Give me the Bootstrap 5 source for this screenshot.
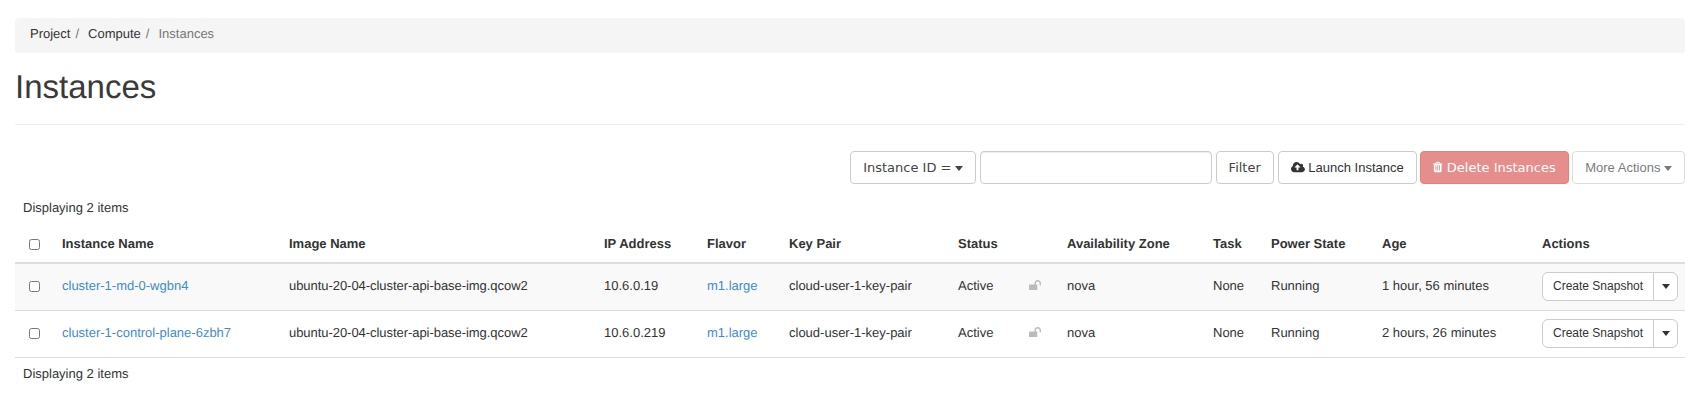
<!DOCTYPE html>
<html lang="en">
  <head>
    <meta charset="UTF-8" />
    <meta name="viewport" content="width=device-width, initial-scale=1.0" />
    <title>Instances</title>
    <link href="https://cdn.jsdelivr.net/npm/bootstrap@5.3.3/dist/css/bootstrap.min.css" rel="stylesheet" />
    <style>
      body {
        color: #333;
        font-family: "Liberation Sans", Arial, sans-serif;
        font-size: 13px;
        line-height: 1.43;
        text-rendering: geometricPrecision;
      }

      .page-wrap {
        padding: 18px 15px 0;
      }

      .crumbs {
        background-color: #f5f5f5;
        border-radius: 4px;
        height: 35px;
        padding: 7px 15px;
        margin: 0;
        font-size: 13px;
      }

      .crumbs .breadcrumb-item + .breadcrumb-item {
        padding-left: 5px;
      }

      .crumbs .breadcrumb-item + .breadcrumb-item::before {
        color: #777;
        padding-right: 9px;
      }

      .crumbs .breadcrumb-item {
        color: #333;
      }

      .crumbs .breadcrumb-item.active {
        color: #777;
      }

      .page-title {
        font-family: "Liberation Sans", Arial, sans-serif;
        font-size: 33px;
        font-weight: 400;
        line-height: 36px;
        color: #3a3a3a;
        margin: 16px 0 0;
        padding-bottom: 19px;
        border-bottom: 1px solid #eee;
      }

      .toolbar {
        margin-top: 26px;
        gap: 4px;
      }

      .tool-btn {
        font-family: "DejaVu Sans", sans-serif;
        font-size: 13px;
        height: 33px;
        padding: 0 12px;
        color: #444;
        background-color: #fff;
        border: 1px solid #ccc;
        border-radius: 4px;
        line-height: 31px;
        white-space: nowrap;
      }

      .tool-btn.plain-font {
        font-family: "Liberation Sans", Arial, sans-serif;
        font-size: 13px;
        line-height: 27px;
        color: #333;
      }

      .tool-btn.btn-del,
      .tool-btn.btn-del:disabled {
        background-color: #d9534f;
        border-color: #d43f3a;
        color: #fff;
        opacity: 0.65;
        padding: 0 12.5px;
        margin-left: -1px;
      }

      .tool-btn.btn-more,
      .tool-btn.btn-more:disabled {
        color: #333;
        border-color: #ccc;
        background-color: #fff;
        opacity: 0.65;
        margin-left: -1px;
      }

      .filter-input {
        width: 232px;
        height: 33px;
        border: 1px solid #ccc;
        border-radius: 4px;
        box-shadow: inset 0 1px 1px rgba(0, 0, 0, 0.075);
      }

      .caret-mark {
        display: inline-block;
        width: 0;
        height: 0;
        margin-left: 0;
        vertical-align: middle;
        border-top: 5px solid;
        border-left: 4px solid transparent;
        border-right: 4px solid transparent;
      }

      .caret-mark.tight {
        margin-left: -1px;
      }

      .tool-icon {
        height: 12px;
        vertical-align: -1px;
        fill: currentColor;
      }

      .cloud-icon {
        height: 13px;
        vertical-align: -2px;
      }

      .item-count {
        padding: 0 8px;
        margin: 0;
        color: #333;
        line-height: 19px;
      }

      .top-count {
        margin-top: 14px;
      }

      .bottom-count {
        margin-top: 6px;
      }

      .inst-table {
        table-layout: fixed;
        width: 1670px;
        margin: 0;
        color: #333;
        --bs-table-bg: transparent;
      }

      .inst-table th {
        font-weight: 700;
        height: 46px;
        padding: 8px;
        vertical-align: bottom;
        border-bottom: 2px solid #ddd;
      }

      .inst-table td {
        height: 47px;
        padding: 8px 8px 9px;
        vertical-align: middle;
        border-bottom: 1px solid #ddd;
        white-space: nowrap;
      }

      .inst-table tbody tr:first-child td {
        background-color: #f9f9f9;
      }

      .inst-table a {
        color: #428bca;
        text-decoration: none;
      }

      .inst-table td.image-name {
        letter-spacing: -0.05px;
      }

      .inst-table input[type="checkbox"] {
        display: block;
        width: 11px;
        height: 11px;
        margin: 0 0 0 6px;
      }

      .inst-table th input[type="checkbox"] {
        margin-bottom: 4px;
      }

      .lock-icon {
        width: 12px;
        height: 11px;
        fill: #bbb;
        display: block;
        margin: -2px 0 0 1px;
      }

      .snap-btn {
        font-size: 12px;
        color: #333;
        background-color: #fff;
        border-color: #ccc;
        height: 29px;
        line-height: 17px;
        padding: 5px 10px;
        white-space: nowrap;
      }

      .snap-toggle {
        width: 25px;
        padding: 0;
      }
    </style>
  </head>
  <body>
    <div class="page-wrap">
      <nav aria-label="breadcrumb">
        <ol class="breadcrumb crumbs">
          <li class="breadcrumb-item">Project</li>
          <li class="breadcrumb-item">Compute</li>
          <li class="breadcrumb-item active" aria-current="page">Instances</li>
        </ol>
      </nav>

      <h1 class="page-title">Instances</h1>

      <!-- Filter and action buttons -->
      <div class="toolbar d-flex justify-content-end">
        <button type="button" class="btn tool-btn">Instance ID = <span class="caret-mark tight"></span></button>
        <input type="text" class="form-control filter-input" aria-label="Filter" />
        <button type="button" class="btn tool-btn">Filter</button>
        <button type="button" class="btn tool-btn plain-font">
          <svg class="tool-icon cloud-icon" viewBox="0 0 1920 1792"><path d="M1280 864q0-14-9-23l-352-352q-9-9-23-9t-23 9l-351 351q-10 12-10 24 0 14 9 23t23 9h224v352q0 13 9.500 22.500t22.500 9.500h192q13 0 22.500-9.500t9.500-22.500v-352h224q13 0 22.500-9.500t9.500-22.500zm640 288q0 159-112.500 271.500t-271.500 112.500h-1088q-185 0-316.500-131.500t-131.500-316.500q0-130 70-240t188-165q-2-30-2-43 0-212 150-362t362-150q156 0 285.500 87t188.500 231q71-62 166-62 106 0 181 75t75 181q0 76-41 138 130 31 213.500 135.500t83.500 236.500z"/></svg>
          Launch Instance
        </button>
        <button type="button" class="btn tool-btn btn-del" disabled>
          <svg class="tool-icon" viewBox="0 0 1408 1792"><path d="M512 1376v-704q0-14-9-23t-23-9h-64q-14 0-23 9t-9 23v704q0 14 9 23t23 9h64q14 0 23-9t9-23zm256 0v-704q0-14-9-23t-23-9h-64q-14 0-23 9t-9 23v704q0 14 9 23t23 9h64q14 0 23-9t9-23zm256 0v-704q0-14-9-23t-23-9h-64q-14 0-23 9t-9 23v704q0 14 9 23t23 9h64q14 0 23-9t9-23zm-544-992h448l-48-117q-7-9-17-11h-317q-10 2-17 11zm928 32v64q0 14-9 23t-23 9h-96v948q0 83-47 143.500t-113 60.500h-832q-66 0-113-58.500t-47-141.500v-952h-96q-14 0-23-9t-9-23v-64q0-14 9-23t23-9h309l70-167q15-37 54-63t79-26h320q40 0 79 26t54 63l70 167h309q14 0 23 9t9 23z"/></svg>
          Delete Instances
        </button>
        <button type="button" class="btn tool-btn plain-font btn-more" disabled>More Actions <span class="caret-mark"></span></button>
      </div>

      <p class="item-count top-count">Displaying 2 items</p>

      <table class="table inst-table">
        <colgroup>
          <col style="width: 39px" />
          <col style="width: 227px" />
          <col style="width: 315px" />
          <col style="width: 103px" />
          <col style="width: 82px" />
          <col style="width: 169px" />
          <col style="width: 70px" />
          <col style="width: 39px" />
          <col style="width: 146px" />
          <col style="width: 58px" />
          <col style="width: 111px" />
          <col style="width: 160px" />
          <col style="width: 151px" />
        </colgroup>
        <thead>
          <tr>
            <th><input type="checkbox" aria-label="Select all" /></th>
            <th>Instance Name</th>
            <th>Image Name</th>
            <th>IP Address</th>
            <th>Flavor</th>
            <th>Key Pair</th>
            <th>Status</th>
            <th></th>
            <th>Availability Zone</th>
            <th>Task</th>
            <th>Power State</th>
            <th>Age</th>
            <th>Actions</th>
          </tr>
        </thead>
        <tbody>
          <tr>
            <td><input type="checkbox" aria-label="Select row" /></td>
            <td><a href="#">cluster-1-md-0-wgbn4</a></td>
            <td class="image-name">ubuntu-20-04-cluster-api-base-img.qcow2</td>
            <td>10.6.0.19</td>
            <td><a href="#">m1.large</a></td>
            <td>cloud-user-1-key-pair</td>
            <td>Active</td>
            <td><svg class="lock-icon" viewBox="0 128 1664 1536"><path d="M1664 576v256q0 26-19 45t-45 19h-64q-26 0-45-19t-19-45v-256q0-106-75-181t-181-75-181 75-75 181v192h96q40 0 68 28t28 68v576q0 40-28 68t-68 28h-960q-40 0-68-28t-28-68v-576q0-40 28-68t68-28h672v-192q0-185 131.500-316.500t316.500-131.500 316.500 131.500 131.500 316.500z"/></svg></td>
            <td>nova</td>
            <td>None</td>
            <td>Running</td>
            <td>1 hour, 56 minutes</td>
            <td>
              <div class="btn-group">
                <button type="button" class="btn snap-btn">Create Snapshot</button>
                <button type="button" class="btn snap-btn snap-toggle" aria-label="More"><span class="caret-mark"></span></button>
              </div>
            </td>
          </tr>
          <tr>
            <td><input type="checkbox" aria-label="Select row" /></td>
            <td><a href="#">cluster-1-control-plane-6zbh7</a></td>
            <td class="image-name">ubuntu-20-04-cluster-api-base-img.qcow2</td>
            <td>10.6.0.219</td>
            <td><a href="#">m1.large</a></td>
            <td>cloud-user-1-key-pair</td>
            <td>Active</td>
            <td><svg class="lock-icon" viewBox="0 128 1664 1536"><path d="M1664 576v256q0 26-19 45t-45 19h-64q-26 0-45-19t-19-45v-256q0-106-75-181t-181-75-181 75-75 181v192h96q40 0 68 28t28 68v576q0 40-28 68t-68 28h-960q-40 0-68-28t-28-68v-576q0-40 28-68t68-28h672v-192q0-185 131.500-316.500t316.500-131.500 316.500 131.500 131.500 316.500z"/></svg></td>
            <td>nova</td>
            <td>None</td>
            <td>Running</td>
            <td>2 hours, 26 minutes</td>
            <td>
              <div class="btn-group">
                <button type="button" class="btn snap-btn">Create Snapshot</button>
                <button type="button" class="btn snap-btn snap-toggle" aria-label="More"><span class="caret-mark"></span></button>
              </div>
            </td>
          </tr>
        </tbody>
      </table>

      <p class="item-count bottom-count">Displaying 2 items</p>
    </div>
    <script src="https://cdn.jsdelivr.net/npm/bootstrap@5.3.3/dist/js/bootstrap.bundle.min.js"></script>
  </body>
</html>
